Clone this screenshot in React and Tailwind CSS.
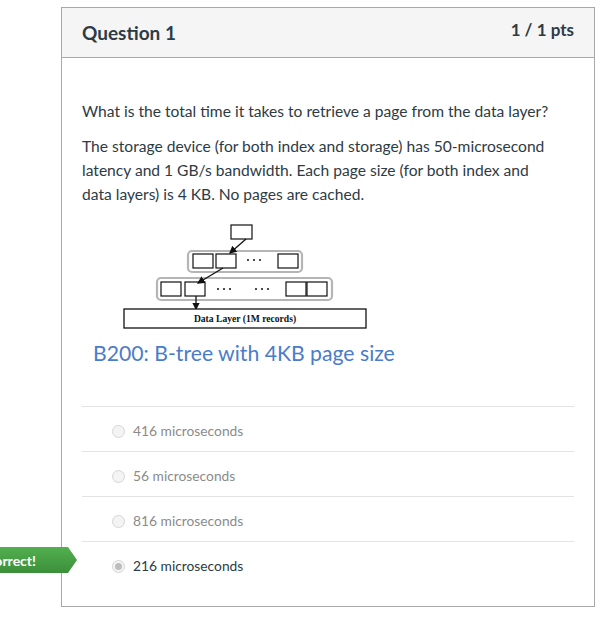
const answers = [
  { label: "416 microseconds", selected: false },
  { label: "56 microseconds", selected: false },
  { label: "816 microseconds", selected: false },
  { label: "216 microseconds", selected: true },
];

function Box({ x, y, w = 20, h = 14 }) {
  return <rect x={x} y={y} width={w} height={h} fill="#fff" stroke="#111" strokeWidth="1.2" />;
}

function Dots({ x, y }) {
  return (
    <g fill="#222">
      <circle cx={x} cy={y} r="1.1" />
      <circle cx={x + 6} cy={y} r="1.1" />
      <circle cx={x + 12} cy={y} r="1.1" />
    </g>
  );
}

function BTreeDiagram() {
  return (
    <svg width="260" height="112" viewBox="120 220 260 112" className="ml-[38px] mt-[14px] block">
      <defs>
        <marker id="arrow" viewBox="0 0 6 6" refX="5" refY="3" markerWidth="6" markerHeight="6" orient="auto">
          <path d="M0 0 L6 3 L0 6 Z" fill="#111" />
        </marker>
      </defs>
      <Box x={231} y={225} w={21} h={14} />
      <rect x={188} y={251} width={114} height={21} rx={4} fill="none" stroke="#b5b5b5" strokeWidth="2.2" />
      <Box x={193} y={254} />
      <Box x={216} y={254} />
      <Dots x={248} y={260} />
      <Box x={278} y={254} />
      <rect x={157} y={278} width={175} height={22} rx={4} fill="none" stroke="#b5b5b5" strokeWidth="2.2" />
      <Box x={161} y={282} />
      <Box x={185} y={282} />
      <Dots x={218} y={289} />
      <Dots x={256} y={289} />
      <Box x={286} y={282} />
      <Box x={307} y={282} />
      <line x1={246} y1={239} x2={230} y2={253} stroke="#111" strokeWidth="1.3" markerEnd="url(#arrow)" />
      <line x1={223} y1={268} x2={198} y2={283} stroke="#111" strokeWidth="1.3" markerEnd="url(#arrow)" />
      <line x1={196} y1={296} x2={196} y2={309} stroke="#111" strokeWidth="1.3" markerEnd="url(#arrow)" />
      <rect x={124} y={309} width={242} height={19} fill="#fff" stroke="#111" strokeWidth="1.3" />
      <text
        x={245}
        y={322}
        textAnchor="middle"
        fontSize="9.6"
        fontWeight="600"
        fill="#111"
        fontFamily="'Liberation Serif', serif"
      >
        Data Layer (1M records)
      </text>
    </svg>
  );
}

function Radio({ selected }) {
  return (
    <span className="flex h-[13px] w-[13px] items-center justify-center rounded-full border border-[#d5d5d5] bg-[#f4f4f4]">
      {selected && <span className="h-[7px] w-[7px] rounded-full bg-[#bdbdbd]" />}
    </span>
  );
}

export default function App() {
  return (
    <div className="relative h-[629px] w-[611px] overflow-hidden bg-white font-['Lato','Open_Sans',sans-serif] text-[#2d3b45]">
      <div className="ml-[61px] mt-[7px] w-[534px] border border-[#a8a8a8]">
        <div className="flex h-[50px] items-start justify-between border-b border-[#a8a8a8] bg-[#f5f5f5] px-5">
          <h2 className="mt-[11px] text-[19px] font-bold">Question 1</h2>
          <span className="mt-[9px] text-[17px] font-bold">1 / 1 pts</span>
        </div>

        <div className="px-5 pb-[20px] pt-[41px]">
          <div className="max-w-[478px] text-[15.6px] leading-[24px]">
            <p>What is the total time it takes to retrieve a page from the data layer?</p>
            <p className="mt-[11px]">
              The storage device (for both index and storage) has 50-microsecond latency and 1 GB/s bandwidth. Each page
              size (for both index and data layers) is 4 KB. No pages are cached.
            </p>
          </div>

          <BTreeDiagram />

          <p className="ml-[11px] mt-[7px] text-[21.2px] leading-[28px] text-[#4a7cc9]">B200: B-tree with 4KB page size</p>

          <div className="mt-[39px]">
            {answers.map((a) => (
              <div key={a.label} className="flex items-start gap-[8px] border-t border-[#e3e3e3] pb-[8px] pl-[30px] pt-[12px]">
                <span className="mt-[6px]">
                  <Radio selected={a.selected} />
                </span>
                <span className={`text-[13.8px] leading-[24px] ${a.selected ? "text-[#2d3b45]" : "text-[#8b8b8b]"}`}>
                  {a.label}
                </span>
              </div>
            ))}
          </div>
        </div>
      </div>

      <div className="absolute left-0 top-[547px] flex h-[26px] w-[77px] items-center justify-end whitespace-nowrap bg-gradient-to-b from-[#52b04f] to-[#3c8f3a] pr-[41px] text-[14px] font-bold text-white [clip-path:polygon(0_0,68px_0,77px_50%,68px_100%,0_100%)]">
        Correct!
      </div>
    </div>
  );
}
